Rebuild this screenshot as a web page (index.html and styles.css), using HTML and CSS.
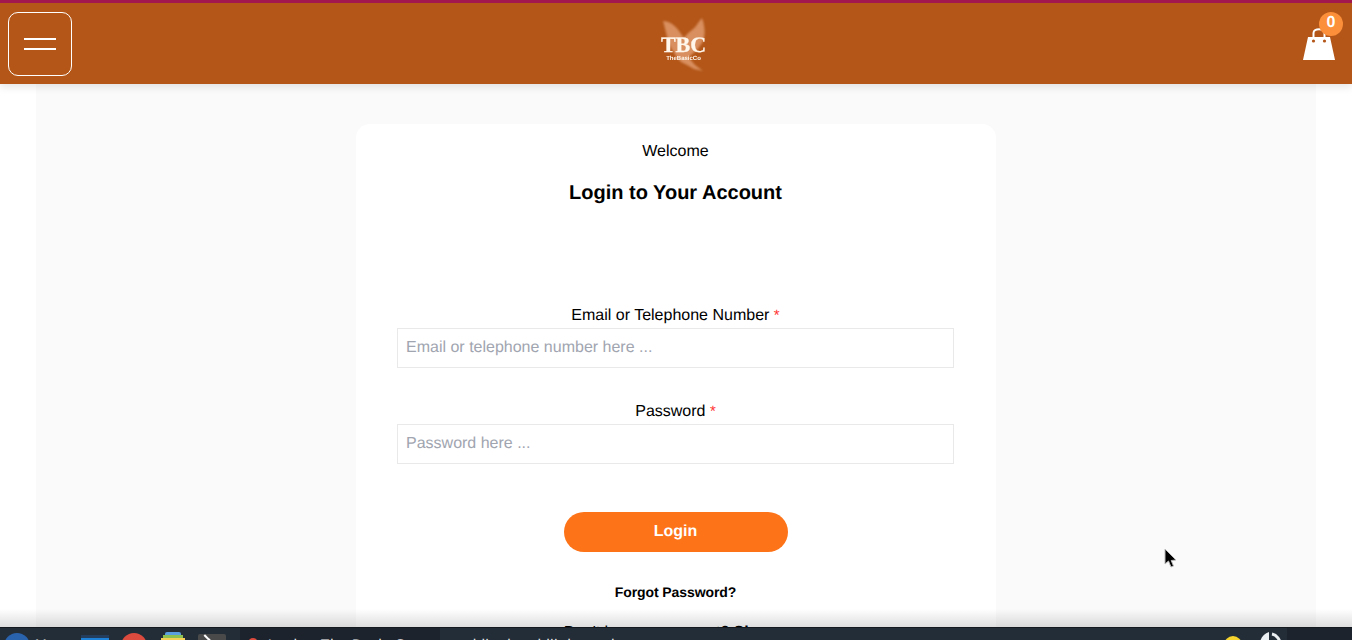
FILE: index.html
```html
<!DOCTYPE html>
<html lang="en">
<head>
<meta charset="utf-8">
<title>Login - TheBasicCo</title>
<link rel="stylesheet" href="styles.css">
</head>
<body>
<div class="page">
  <header class="topbar">
    <button class="menu-btn" aria-label="Menu"><span class="menu-line"></span><span class="menu-line"></span></button>
    <div class="logo">
      <svg class="logo-bird" viewBox="0 0 48 54" width="48" height="54" aria-hidden="true">
        <path fill="#d98f5f" d="M3 3 C9 3 15 7 19 13 L24 20 C28 14 33 12 36 8 C38 5 40 2 42 0 C45 8 46 18 42 25 L37 32 L31 37 L29 40 L35 47 L43 53 L34 51 L27 47 L21 44 L16 38 L11 30 C8 24 6 14 3 3 Z"/>
      </svg>
      <div class="logo-text">
        <span class="logo-main">TBC</span>
        <span class="logo-sub">TheBasicCo</span>
      </div>
    </div>
    <div class="cart">
      <svg viewBox="0 0 32 32" width="32" height="32" aria-hidden="true">
        <path class="cart-handle" d="M10.5 11 V5 C10.5 0 21.5 0 21.5 5 V11"/>
        <path class="cart-body" d="M5 9 H27 L32 32 H0 Z"/>
        <circle class="cart-hole" cx="10.5" cy="13" r="1.6"/>
        <circle class="cart-hole" cx="21.5" cy="13" r="1.6"/>
      </svg>
      <span class="cart-badge">0</span>
    </div>
  </header>

  <main class="content">
    <section class="column">
      <form class="card">
        <p class="welcome">Welcome</p>
        <h1 class="title">Login to Your Account</h1>

        <div class="field field-first">
          <label class="label">Email or Telephone Number <span class="req">*</span></label>
          <input class="input" type="text" placeholder="Email or telephone number here ...">
        </div>
        <div class="field">
          <label class="label">Password <span class="req">*</span></label>
          <input class="input" type="password" placeholder="Password here ...">
        </div>

        <button class="login" type="button">Login</button>
        <a class="forgot">Forgot Password?</a>
        <p class="signup">Don't have an account? <b>Signup</b></p>
      </form>
    </section>
  </main>
</div>

<svg class="cursor" viewBox="0 0 14 20" width="14" height="20" aria-hidden="true">
  <path fill="#000" stroke="#bbb" stroke-width="1" d="M1 1 V16 L4.5 13 L7 19 L9.5 18 L7.2 12.5 L12 12 Z"/>
</svg>

<div class="shade"></div>
<footer class="taskbar">
  <div class="launcher">
    <span class="tb-start"></span>
    <span class="tb-menu">Menu</span>
    <span class="tb-files"></span>
    <span class="tb-browser"></span>
    <span class="tb-stack"><i class="s1"></i><i class="s2"></i><i class="s3"></i></span>
    <span class="tb-term"></span>
  </div>
  <div class="tb-window"><span class="tb-dot"></span><span>Login - The Basic Co</span></div>
  <div class="tb-task">mobile data bill the option</div>
  <div class="tray">
    <span class="tb-sun"></span>
    <svg class="tb-power" viewBox="0 0 24 24" width="24" height="24" aria-hidden="true">
      <path class="power-wedge" d="M11 0 V24 H2 L2 18 C0 10 4 2 11 0 Z"/>
      <path class="power-arc" d="M14 2 C19 3 22 8 22 12 C22 17 19 21 14 22"/>
    </svg>
  </div>
  <div class="tb-clock"></div>
</footer>
</body>
</html>
```

FILE: styles.css
```css
* { box-sizing: border-box; }
html, body { margin: 0; height: 100%; overflow: hidden; background: #fff; }
body { font-family: "Liberation Sans", Arial, sans-serif; color: #000; text-rendering: geometricPrecision; }

.page { height: 640px; display: flex; flex-direction: column; overflow: hidden; }

.topbar {
  position: relative;
  z-index: 2;
  flex: none;
  height: 84px;
  background: #b35618;
  border-top: 3px solid #a3174f;
  display: flex;
  align-items: center;
  justify-content: space-between;
  padding: 0 17px 0 8px;
  box-shadow: 0 3px 8px rgba(0, 0, 0, .1);
}

.menu-btn {
  width: 64px;
  height: 64px;
  margin-top: 1px;
  background: transparent;
  border: 1px solid #fff;
  border-radius: 10px;
  display: flex;
  flex-direction: column;
  align-items: center;
  justify-content: center;
  gap: 8px;
  padding: 0;
}
.menu-line { display: block; width: 32px; height: 2px; background: #fff; }

.logo { position: relative; width: 48px; height: 54px; margin-top: 3px; margin-left: -8px; }
.logo-bird { position: absolute; left: 0; top: 0; filter: blur(.8px); }
.logo-text {
  position: absolute;
  left: 0;
  right: 0;
  top: 15px;
  display: flex;
  flex-direction: column;
  align-items: center;
  color: #fff6ec;
  filter: blur(.4px);
}
.logo-main { font: bold 22px/23px "Liberation Serif", serif; -webkit-text-stroke: .3px #fff6ec; }
.logo-sub { font: bold 6px/7px "Liberation Sans", sans-serif; }

.cart { position: relative; width: 32px; height: 32px; margin-top: -2px; margin-bottom: -2px; }
.cart svg { display: block; }
.cart-handle { fill: none; stroke: #fff; stroke-width: 2; }
.cart-body { fill: #fff; }
.cart-hole { fill: #b35618; }
.cart-badge {
  position: absolute;
  left: 16px;
  top: -16px;
  width: 24px;
  height: 24px;
  border-radius: 50%;
  background: #fb8f3a;
  color: #fff;
  font-weight: bold;
  font-size: 16px;
  line-height: 22px;
  text-align: center;
}

.content { flex: 1; min-height: 0; padding: 0 36px; }
.column { height: 100%; background: #fafafa; padding-top: 40px; display: flex; justify-content: center; }

.card {
  width: 640px;
  height: 700px;
  flex: none;
  background: #fff;
  border-radius: 14px;
  padding: 18px 42px 0 41px;
  display: flex;
  flex-direction: column;
  align-items: center;
  text-align: center;
}

.welcome { margin: 0; font-size: 16px; line-height: 19px; }
.title { margin: 21px 0 0; font-size: 20px; line-height: 23px; font-weight: bold; }

.field { width: 100%; margin-top: 34px; }
.field-first { margin-top: 101px; }
.label { display: block; font-size: 16px; line-height: 20px; margin-bottom: 2px; }
.req { color: #f33; font-size: 15px; }
.input {
  display: block;
  width: 100%;
  height: 40px;
  border: 1px solid #e9e9e9;
  background: #fff;
  padding: 0 8px;
  font: 16px "Liberation Sans", sans-serif;
  text-rendering: geometricPrecision;
  outline: none;
}
.input::placeholder { color: #a1a5b0; opacity: 1; }

.login {
  margin-top: 48px;
  width: 224px;
  height: 40px;
  flex: none;
  border: 0;
  border-radius: 20px;
  background: #fd7318;
  color: #fff;
  padding: 0 0 1px;
  font: bold 16px "Liberation Sans", sans-serif;
  text-rendering: geometricPrecision;
}
.forgot { margin-top: 32px; font-size: 14px; line-height: 16px; font-weight: bold; letter-spacing: -.1px; }
.signup { margin: 23px 0 0; font-size: 16px; line-height: 19px; letter-spacing: -.1px; }

.cursor { position: absolute; left: 1164px; top: 548px; z-index: 6; }

.shade {
  position: absolute;
  left: 0;
  right: 0;
  bottom: 13px;
  height: 18px;
  z-index: 4;
  background: linear-gradient(to bottom, rgba(0, 0, 0, 0), rgba(0, 0, 0, .13));
}

.taskbar {
  position: absolute;
  left: 0;
  right: 0;
  bottom: 0;
  height: 13px;
  z-index: 5;
  overflow: hidden;
  background: #232d38;
  border-top: 1px solid #14191f;
  display: flex;
  align-items: flex-start;
  color: #f2f2f2;
  font-size: 14px;
  line-height: 16px;
}

.launcher { flex: none; width: 240px; display: flex; align-items: flex-start; position: relative; }
.tb-start { flex: none; width: 26px; height: 26px; margin: 5px 0 0 4px; border-radius: 50%; background: #2a63ad; }
.tb-menu { flex: none; width: 46px; margin: 8px 0 0 5px; }
.tb-files { flex: none; width: 28px; height: 24px; margin-top: 7px; background: linear-gradient(to bottom, #243d5c 0 3px, #1e82d8 3px); }
.tb-browser { flex: none; width: 26px; height: 26px; margin: 5px 0 0 12px; border-radius: 50%; background: #dd4b3e; }
.tb-stack { flex: none; width: 24px; margin: 4px 0 0 14px; display: flex; flex-direction: column; align-items: center; }
.tb-stack i { display: block; height: 3px; }
.s1 { width: 16px; background: #5a9fe0; border-radius: 2px 2px 0 0; }
.s2 { width: 20px; background: #8cc152; }
.s3 { width: 24px; height: 6px !important; background: #f6cf57; }
.tb-term { flex: none; width: 28px; height: 24px; margin: 6px 0 0 13px; border-radius: 2px; background: #4a4a4a; position: relative; }
.tb-term::before { content: ""; position: absolute; left: 3px; top: 2px; width: 6px; height: 6px; border-right: 2px solid #fff; border-top: 2px solid #fff; transform: rotate(45deg); }

.tb-window { flex: none; width: 200px; height: 100%; background: #1c232c; padding: 8px 0 0 8px; display: flex; align-items: flex-start; gap: 10px; white-space: nowrap; letter-spacing: .8px; }
.tb-dot { flex: none; width: 10px; height: 10px; margin-top: 2px; border-radius: 50%; background: #dd4b3e; }
.tb-task { flex: 1; min-width: 0; padding: 8px 0 0 12px; white-space: nowrap; letter-spacing: .8px; }

.tray { flex: none; width: 77px; position: relative; height: 100%; }
.tb-sun { position: absolute; left: 14px; top: 8px; width: 18px; height: 18px; border-radius: 50%; background: #f6d32d; }
.tb-power { position: absolute; left: 48px; top: 4px; }
.power-wedge { fill: #eceff1; }
.power-arc { fill: none; stroke: #eceff1; stroke-width: 3; }
.tb-clock { flex: none; width: 65px; height: 100%; background: #1c232c; }
```
